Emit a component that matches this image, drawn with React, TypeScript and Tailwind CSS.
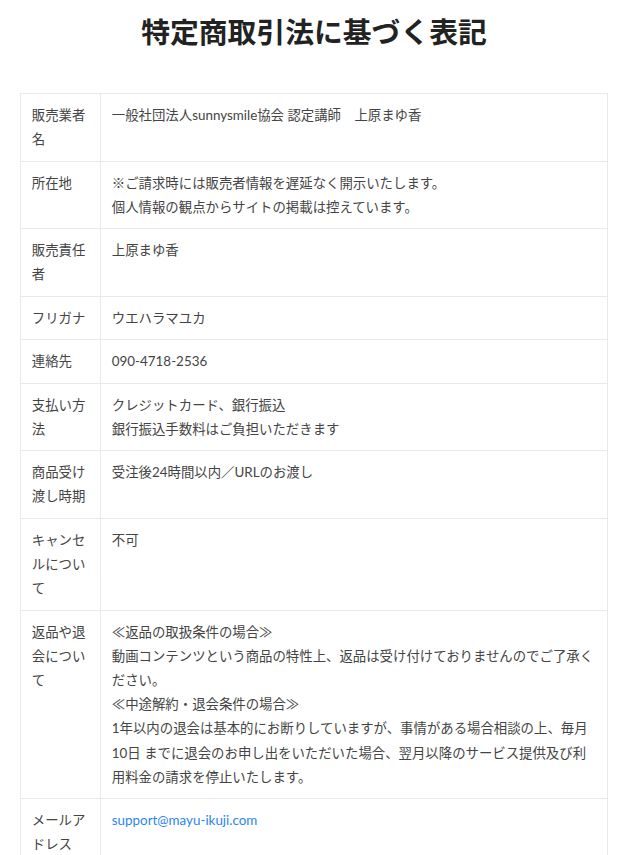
const font = { fontFamily: '"Lato", "Noto Sans CJK JP", sans-serif' }

const rows: { label: string; lines: React.ReactNode[] }[] = [
  { label: '販売業者名', lines: ['一般社団法人sunnysmile協会 認定講師　上原まゆ香'] },
  {
    label: '所在地',
    lines: ['※ご請求時には販売者情報を遅延なく開示いたします。', '個人情報の観点からサイトの掲載は控えています。'],
  },
  { label: '販売責任者', lines: ['上原まゆ香'] },
  { label: 'フリガナ', lines: ['ウエハラマユカ'] },
  { label: '連絡先', lines: ['090-4718-2536'] },
  { label: '支払い方法', lines: ['クレジットカード、銀行振込', '銀行振込手数料はご負担いただきます'] },
  { label: '商品受け渡し時期', lines: ['受注後24時間以内／URLのお渡し'] },
  { label: 'キャンセルについて', lines: ['不可'] },
  {
    label: '返品や退会について',
    lines: [
      '≪返品の取扱条件の場合≫',
      '動画コンテンツという商品の特性上、返品は受け付けておりませんのでご了承ください。',
      '≪中途解約・退会条件の場合≫',
      '1年以内の退会は基本的にお断りしていますが、事情がある場合相談の上、毎月10日 までに退会のお申し出をいただいた場合、翌月以降のサービス提供及び利用料金の請求を停止いたします。',
    ],
  },
  {
    label: 'メールアドレス',
    lines: [
      <a key="m" href="#" className="text-[#2a86f0]">
        support@mayu-ikuji.com
      </a>,
    ],
  },
]

export default function App() {
  return (
    <div className="min-h-screen bg-white pl-5 pr-[14px] pt-[10px]" style={font}>
      <h1 className="text-center text-[28.8px] leading-[44px] font-bold text-[#222]">特定商取引法に基づく表記</h1>

      <table className="mt-[39px] w-full border-collapse text-[13.4px] leading-[24.2px] text-[#444]">
        <tbody>
          {rows.map((r) => (
            <tr key={r.label}>
              <th className="w-[80px] border border-[#e6e9ed] px-[10.8px] py-[9.1px] text-left align-top font-normal break-all">
                {r.label}
              </th>
              <td className="border border-[#e6e9ed] px-[10.8px] py-[9.1px] align-top">
                {r.lines.map((l, i) => (
                  <div key={i}>{l}</div>
                ))}
              </td>
            </tr>
          ))}
        </tbody>
      </table>
    </div>
  )
}
